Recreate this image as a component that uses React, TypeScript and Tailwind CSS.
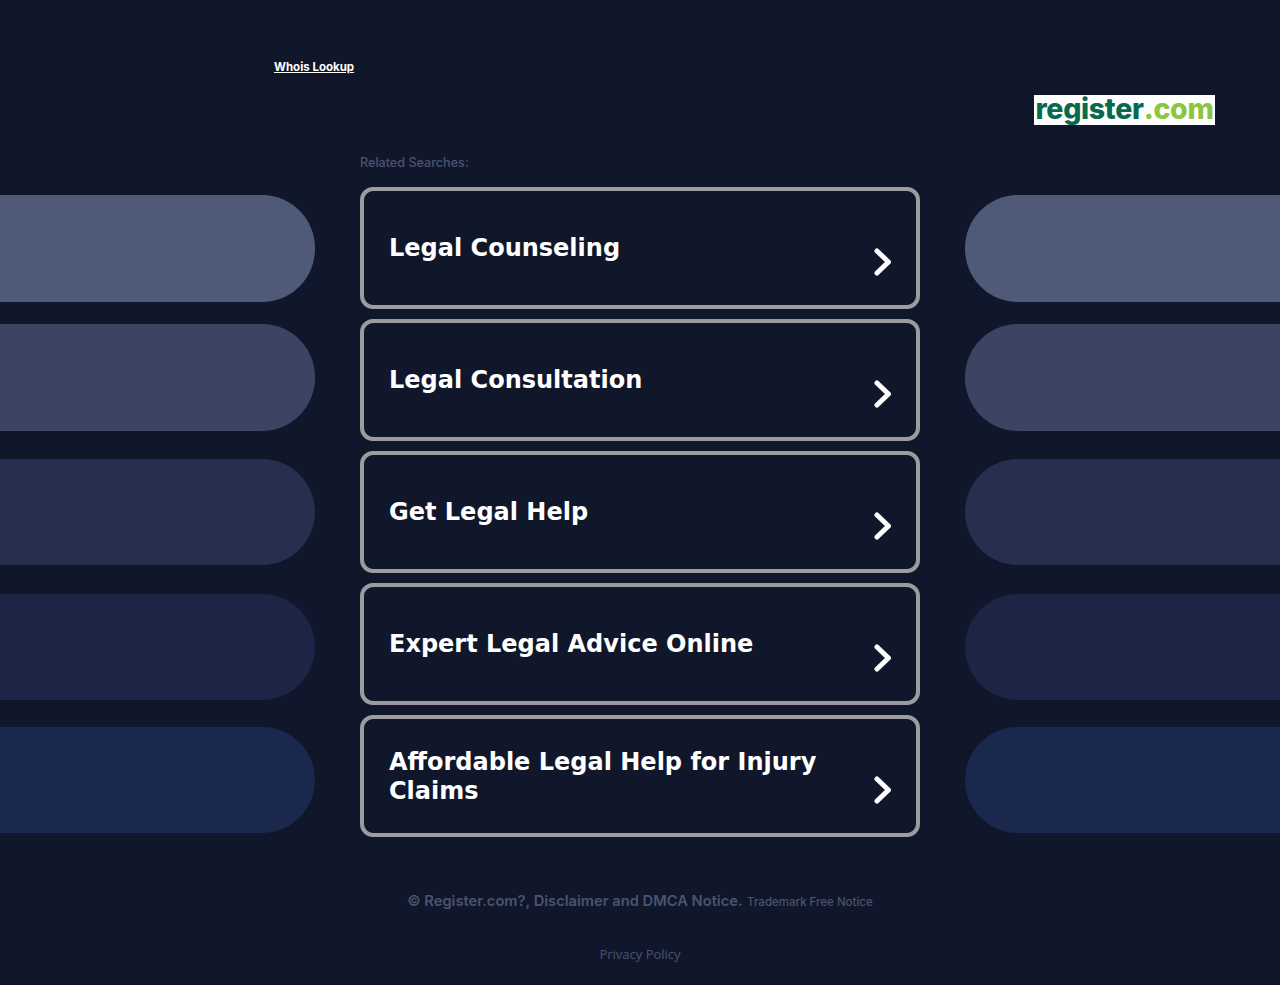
const LINKS = [
  "Legal Counseling",
  "Legal Consultation",
  "Get Legal Help",
  "Expert Legal Advice Online",
  "Affordable Legal Help for Injury Claims",
];

const SIDE_PILLS = [
  "h-[107px] bg-[#4f5a78]",
  "mt-[22px] h-[107px] bg-[#3b4563]",
  "mt-[28px] h-[106px] bg-[#272f50]",
  "mt-[29px] h-[106px] bg-[#1c2546]",
  "mt-[27px] h-[106px] bg-[#1b284d]",
];

const Chevron = () => (
  <svg
    viewBox="0 0 18 28"
    className="absolute right-[24px] bottom-[29px] h-[28px] w-[18px]"
    fill="none"
    stroke="#ffffff"
    strokeWidth="5"
    strokeLinecap="round"
    strokeLinejoin="round"
  >
    <polyline points="3,3 14.5,14 3,25" />
  </svg>
);

const LinkCard = ({ label }: { label: string }) => (
  <a className="relative flex h-[122px] items-center rounded-[13px] border-[4.5px] border-[#9b9ba0] bg-[#10172b] pr-[90px] pl-[25px] font-['DejaVu_Sans',sans-serif] text-[24px] leading-[29px] font-bold text-white">
    <span className="pt-px">{label}</span>
    <Chevron />
  </a>
);

const SideColumn = ({ side }: { side: "left" | "right" }) => (
  <div className="flex w-[315px] shrink-0 flex-col pt-[40px]">
    {SIDE_PILLS.map((pill) => (
      <div
        key={pill}
        className={`${pill} ${side === "left" ? "rounded-r-[53px]" : "rounded-l-[53px]"}`}
      />
    ))}
  </div>
);

export default function App() {
  return (
    <div className="h-[985px] overflow-hidden bg-[#10172b] font-['Inter',sans-serif]">
      <header className="h-[155px]">
        <div className="pt-[58px] pl-[274px] leading-[14px]">
          <a className="text-[11.5px] font-bold text-white underline">Whois Lookup</a>
        </div>
        <div className="mt-[21px] flex justify-end pr-[65px]">
          <div className="flex h-[30px] w-[181px] items-start justify-center bg-white text-[28.5px] leading-[27px] font-extrabold tracking-[-0.3px]">
            <span className="text-[#066a4d]">register</span>
            <span className="text-[#8cc63f]">.com</span>
          </div>
        </div>
      </header>

      <main className="flex justify-between">
        <SideColumn side="left" />
        <div className="w-[560px] shrink-0">
          <div className="h-[32px] pt-[1px] text-[12.6px] leading-[14px] font-medium text-[#4a5370]">
            Related Searches:
          </div>
          <div className="flex flex-col gap-[10px]">
            {LINKS.map((label) => (
              <LinkCard key={label} label={label} />
            ))}
          </div>
        </div>
        <SideColumn side="right" />
      </main>

      <footer className="text-center">
        <div className="mt-[51px] text-[#4a5370]">
          <span className="text-[14.7px] leading-[17px] font-semibold">
            © Register.com?, Disclaimer and DMCA Notice.
          </span>{" "}
          <span className="text-[11.5px] font-medium">Trademark Free Notice</span>
        </div>
        <div className="mt-[34px] font-['Open_Sans',sans-serif] text-[13px] leading-[16px] text-[#4a5370]">
          Privacy Policy
        </div>
      </footer>
    </div>
  );
}
